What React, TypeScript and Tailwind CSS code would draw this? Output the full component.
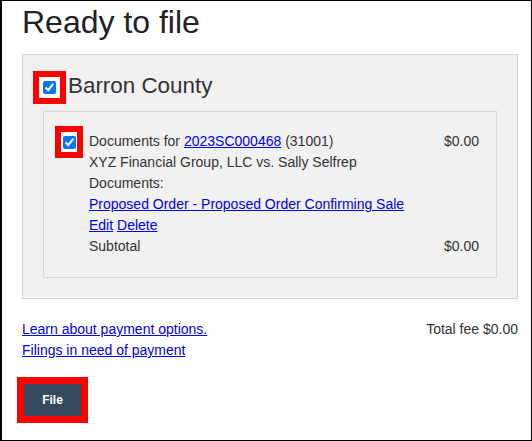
import React, { useState } from 'react';

const RedFrame = ({ children, className }: { children: React.ReactNode; className: string }) => (
  <span className={`box-border flex shrink-0 items-center justify-center border-[6px] border-[#ff0000] bg-white ${className}`}>
    {children}
  </span>
);

const App = () => {
  const [county, setCounty] = useState(true);
  const [filing, setFiling] = useState(true);

  return (
    <div
      className="box-border h-[441px] w-[532px] border border-l-2 border-black bg-white pl-5 pr-[13px] text-[14px] leading-[21px] text-[#333333]"
      style={{ fontFamily: '"Liberation Sans", Arial, sans-serif' }}
    >
      <h1 className="mt-[3px] text-[32px] leading-[37px] text-[#222222]">Ready to file</h1>

      <section className="mt-[13px] border border-[#d6d6d6] bg-[#f1f1f1] pb-5 pl-[10px] pr-5 pt-4">
        <div className="flex items-center">
          <RedFrame className="h-[33px] w-[33px]">
            <input
              type="checkbox"
              checked={county}
              onChange={() => setCounty(!county)}
              className="m-0 h-[13px] w-[13px]"
            />
          </RedFrame>
          <h2 className="ml-[2px] mt-[-3px] text-[22.4px] leading-[26px]">Barron County</h2>
        </div>

        <div className="ml-[10px] mt-[7px] flex border border-[#d6d6d6] pb-5 pl-[11px] pr-[17px] pt-[19px]">
          <RedFrame className="-mt-[5px] h-[32px] w-[28px]">
            <input
              type="checkbox"
              checked={filing}
              onChange={() => setFiling(!filing)}
              className="m-0 h-[13px] w-[13px]"
            />
          </RedFrame>
          <div className="ml-[6px] flex-1">
            <div className="flex justify-between">
              <span>
                Documents for{' '}
                <a href="#" className="text-[#0000ee] underline">
                  2023SC000468
                </a>{' '}
                (31001)
              </span>
              <span>$0.00</span>
            </div>
            <div>XYZ Financial Group, LLC vs. Sally Selfrep</div>
            <div>Documents:</div>
            <div>
              <a href="#" className="text-[#0000ee] underline">
                Proposed Order - Proposed Order Confirming Sale
              </a>
            </div>
            <div>
              <a href="#" className="text-[#0000ee] underline">
                Edit
              </a>{' '}
              <a href="#" className="text-[#0000ee] underline">
                Delete
              </a>
            </div>
            <div className="flex justify-between">
              <span>Subtotal</span>
              <span>$0.00</span>
            </div>
          </div>
        </div>
      </section>

      <div className="mt-5 flex justify-between">
        <div className="flex flex-col">
          <a href="#" className="text-[#0000ee] underline">
            Learn about payment options.
          </a>
          <a href="#" className="text-[#0000ee] underline">
            Filings in need of payment
          </a>
        </div>
        <span>Total fee $0.00</span>
      </div>

      <div className="-ml-[5px] mt-4 inline-block border-[7px] border-[#ff0000]">
        <button className="block h-[32px] w-[57px] bg-[#344a5f] text-[12px] font-bold text-white">File</button>
      </div>
    </div>
  );
};

export default App;
